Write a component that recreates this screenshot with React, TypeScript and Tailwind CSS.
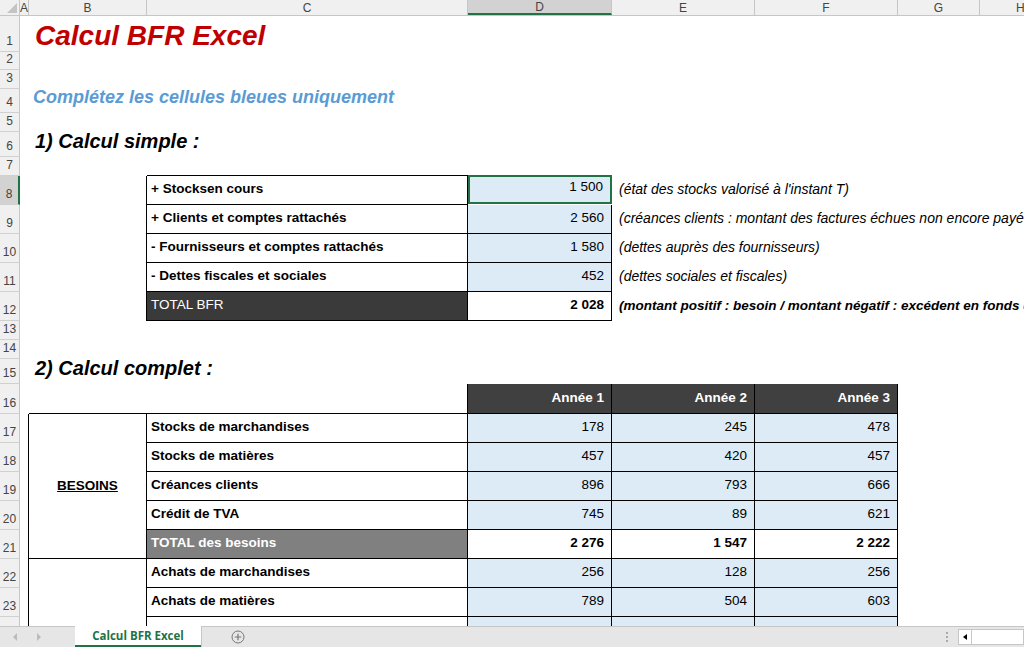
import React from "react";

const GL = "border-b border-transparent";
const F = { fontFamily: '"Liberation Sans", Arial, sans-serif' };

function RH({ n, h, sel }: { n: number | string; h: string; sel?: boolean }) {
  return (
    <div
      className={`${h} w-[20px] shrink-0 flex items-end justify-center pb-[1px] text-[12px] text-[#444] border-b border-[#d0d0d0] ${
        sel ? "bg-[#d2d2d2] border-r-2 border-r-[#217346]" : "bg-[#f0f0f0] border-r border-r-[#c6c6c6]"
      }`}
    >
      {n}
    </div>
  );
}

const blue = "bg-[#ddebf7]";
const numCell = "flex items-end justify-end pr-[7px] pb-[5px] text-[13.5px]";
const lblCell = "flex items-end pl-[4px] pb-[5px] text-[13.5px] font-bold";

function EmptyRow({ n, h }: { n: number; h: string }) {
  return (
    <div className={`flex ${h}`}>
      <RH n={n} h={h} />
      <div className="flex-1" />
    </div>
  );
}

function TextRow({ n, h, children }: { n: number; h: string; children: React.ReactNode }) {
  return (
    <div className={`flex ${h}`}>
      <RH n={n} h={h} />
      <div className="w-[9px] shrink-0" />
      <div className="flex-1 flex items-end pl-[4px] whitespace-nowrap">{children}</div>
    </div>
  );
}

const simple = [
  { n: 8, l: "+ Stocksen cours", v: "1 500", c: "(état des stocks valorisé à l'instant T)" },
  { n: 9, l: "+ Clients et comptes rattachés", v: "2 560", c: "(créances clients : montant des factures échues non encore payées)" },
  { n: 10, l: "- Fournisseurs et comptes rattachés", v: "1 580", c: "(dettes auprès des fournisseurs)" },
  { n: 11, l: "- Dettes fiscales et sociales", v: "452", c: "(dettes sociales et fiscales)" },
];

const complet = [
  { l: "Stocks de marchandises", v: ["178", "245", "478"] },
  { l: "Stocks de matières", v: ["457", "420", "457"] },
  { l: "Créances clients", v: ["896", "793", "666"] },
  { l: "Crédit de TVA", v: ["745", "89", "621"] },
];

export default function App() {
  const cols = [
    { w: "w-[9px]", t: "A" },
    { w: "w-[118px]", t: "B" },
    { w: "w-[321px]", t: "C" },
    { w: "w-[144px]", t: "D", s: true },
    { w: "w-[143px]", t: "E" },
    { w: "w-[143px]", t: "F" },
    { w: "w-[82px]", t: "G" },
  ];
  const rows8 = [17, 18, 19, 20, 21, 22, 23, 24];
  return (
    <div style={F} className="w-[1024px] h-[647px] flex flex-col overflow-hidden bg-white text-black">
      <div className="flex h-[16px] shrink-0 bg-[#f0f0f0] border-b border-[#c6c6c6]">
        <div className="w-[20px] shrink-0 border-r border-[#c6c6c6] relative">
          <div className="absolute right-[2px] bottom-[2px] w-0 h-0 border-l-[10px] border-l-transparent border-b-[10px] border-b-[#c4c4c4]" />
        </div>
        {cols.map((c) => (
          <div
            key={c.t}
            className={`${c.w} shrink-0 border-r border-[#c6c6c6] flex items-center justify-center text-[12px] text-[#444] ${
              c.s ? "bg-[#d2d2d2] border-b-2 border-b-[#217346]" : ""
            }`}
          >
            {c.t}
          </div>
        ))}
        <div className="flex-1 flex items-center pl-[36px] text-[12px] text-[#444]">H</div>
      </div>

      <div className="flex-1 overflow-hidden flex flex-col">
        <TextRow n={1} h="h-[36px]">
          <span className="text-[28px] font-bold italic text-[#c00000] leading-none pb-[2px] pl-[2px]">Calcul BFR Excel</span>
        </TextRow>
        <EmptyRow n={2} h="h-[18px]" />
        <EmptyRow n={3} h="h-[19px]" />
        <TextRow n={4} h="h-[24px]">
          <span className="text-[18px] font-bold italic text-[#5b9bd5] pb-[2px]">Complétez les cellules bleues uniquement</span>
        </TextRow>
        <EmptyRow n={5} h="h-[19px]" />
        <TextRow n={6} h="h-[25px]">
          <span className="text-[20px] font-bold italic pb-[1px] pl-[2px]">1) Calcul simple :</span>
        </TextRow>
        <div className="flex h-[19px]">
          <RH n={7} h="h-[19px]" />
          <div className="w-[9px] shrink-0" />
          <div className="w-[118px] shrink-0" />
          <div className="w-[321px] shrink-0 border-b border-black" />
          <div className="w-[144px] shrink-0 border-b border-black" />
        </div>
        {simple.map((r) => (
          <div key={r.n} className="flex h-[29px]">
            <RH n={r.n} h="h-[29px]" sel={r.n === 8} />
            <div className="w-[9px] shrink-0" />
            <div className="w-[118px] shrink-0 border-r border-black" />
            <div className={`w-[321px] shrink-0 border-r border-b border-black ${lblCell}`}>{r.l}</div>
            <div
              className={`w-[144px] shrink-0 ${blue} ${numCell} ${
                r.n === 8 ? "border-2 border-[#217346] -mt-[1px] mb-[1px]" : "border-r border-b border-black"
              }`}
            >
              {r.v}
            </div>
            <div className="flex-1 flex items-end pl-[7px] pb-[5px] text-[14px] italic whitespace-nowrap">{r.c}</div>
          </div>
        ))}
        <div className="flex h-[29px]">
          <RH n={12} h="h-[29px]" />
          <div className="w-[9px] shrink-0" />
          <div className="w-[118px] shrink-0 border-r border-black" />
          <div className="w-[321px] shrink-0 border-r border-b border-black bg-[#3a3a3a] text-white flex items-end pl-[4px] pb-[5px] text-[13.5px]">
            TOTAL BFR
          </div>
          <div className={`w-[144px] shrink-0 border-r border-b border-black font-bold ${numCell}`}>2 028</div>
          <div className="flex-1 flex items-end pl-[7px] pb-[5px] text-[13.5px] italic font-bold whitespace-nowrap">
            (montant positif : besoin / montant négatif : excédent en fonds de roulement)
          </div>
        </div>
        <EmptyRow n={13} h="h-[19px]" />
        <EmptyRow n={14} h="h-[19px]" />
        <TextRow n={15} h="h-[25px]">
          <span className="text-[20px] font-bold italic pb-[1px] pl-[2px]">2) Calcul complet :</span>
        </TextRow>
        <div className="flex h-[30px]">
          <RH n={16} h="h-[30px]" />
          <div className="w-[9px] shrink-0" />
          <div className="w-[118px] shrink-0 border-b border-black" />
          <div className="w-[321px] shrink-0 border-r border-b border-black" />
          {["Année 1", "Année 2", "Année 3"].map((a, i) => (
            <div
              key={a}
              className={`${i === 0 ? "w-[144px]" : "w-[143px]"} shrink-0 bg-[#404040] text-white font-bold border-r border-b border-black ${numCell}`}
            >
              {a}
            </div>
          ))}
        </div>

        <div className="flex">
          <div className="flex flex-col">
            {rows8.map((n) => (
              <RH key={n} n={n} h="h-[29px]" />
            ))}
          </div>
          <div className="w-[9px] shrink-0 border-r border-black" />
          <div className="w-[118px] shrink-0 flex flex-col">
            <div className="h-[145px] border-r border-b border-black flex items-center justify-center">
              <span className="text-[13.5px] font-bold underline">BESOINS</span>
            </div>
            <div className="h-[87px] border-r border-black" />
          </div>
          <div className="flex flex-col">
            {complet.map((r) => (
              <div key={r.l} className="flex h-[29px]">
                <div className={`w-[321px] border-r border-b border-black ${lblCell}`}>{r.l}</div>
                {r.v.map((v, i) => (
                  <div key={i} className={`${i === 0 ? "w-[144px]" : "w-[143px]"} ${blue} border-r border-b border-black ${numCell}`}>
                    {v}
                  </div>
                ))}
              </div>
            ))}
            <div className="flex h-[29px]">
              <div className="w-[321px] border-r border-b border-black bg-[#808080] text-white font-bold flex items-end pl-[4px] pb-[5px] text-[13.5px]">
                TOTAL des besoins
              </div>
              {["2 276", "1 547", "2 222"].map((v, i) => (
                <div key={i} className={`${i === 0 ? "w-[144px]" : "w-[143px]"} border-r border-b border-black font-bold ${numCell}`}>
                  {v}
                </div>
              ))}
            </div>
            {[
              { l: "Achats de marchandises", v: ["256", "128", "256"] },
              { l: "Achats de matières", v: ["789", "504", "603"] },
              { l: "", v: ["", "", ""] },
            ].map((r, k) => (
              <div key={k} className="flex h-[29px]">
                <div className={`w-[321px] border-r border-b border-black ${lblCell}`}>{r.l}</div>
                {r.v.map((v, i) => (
                  <div key={i} className={`${i === 0 ? "w-[144px]" : "w-[143px]"} ${blue} border-r border-b border-black ${numCell}`}>
                    {v}
                  </div>
                ))}
              </div>
            ))}
          </div>
        </div>
      </div>

      <div className="h-[21px] shrink-0 bg-[#e6e6e6] border-t border-[#c6c6c6] flex items-stretch text-[12px]" style={{ fontFamily: '"Open Sans", "Liberation Sans", sans-serif' }}>
        <div className="w-[75px] flex items-center gap-[18px] pl-[12px]">
          <svg width="6" height="8" viewBox="0 0 6 8"><path d="M5 0L1 4l4 4z" fill="#bbb" /></svg>
          <svg width="6" height="8" viewBox="0 0 6 8"><path d="M1 0l4 4-4 4z" fill="#bbb" /></svg>
        </div>
        <div className="w-[126px] bg-white border-b-2 border-[#217346] flex items-center justify-center font-bold text-[#217346] text-[11.5px] -mt-px">
          Calcul BFR Excel
        </div>
        <div className="w-[30px] border-l border-[#c6c6c6]" />
        <div className="flex items-center">
          <svg width="14" height="14" viewBox="0 0 14 14">
            <circle cx="7" cy="7" r="6" fill="none" stroke="#777" strokeWidth="1" />
            <path d="M7 3.8v6.4M3.8 7h6.4" stroke="#777" strokeWidth="1.2" />
          </svg>
        </div>
        <div className="flex-1" />
        <div className="flex flex-col justify-center gap-[2px] pr-[10px]">
          <div className="w-[2px] h-[2px] bg-[#aaa]" />
          <div className="w-[2px] h-[2px] bg-[#aaa]" />
          <div className="w-[2px] h-[2px] bg-[#aaa]" />
        </div>
        <div className="w-[66px] bg-white border border-[#c6c6c6] my-[2px] flex items-center">
          <div className="w-[13px] h-full border-r border-[#c6c6c6] flex items-center justify-center">
            <svg width="4" height="6" viewBox="0 0 4 6"><path d="M4 0L0 3l4 3z" fill="#000" /></svg>
          </div>
        </div>
      </div>
    </div>
  );
}
